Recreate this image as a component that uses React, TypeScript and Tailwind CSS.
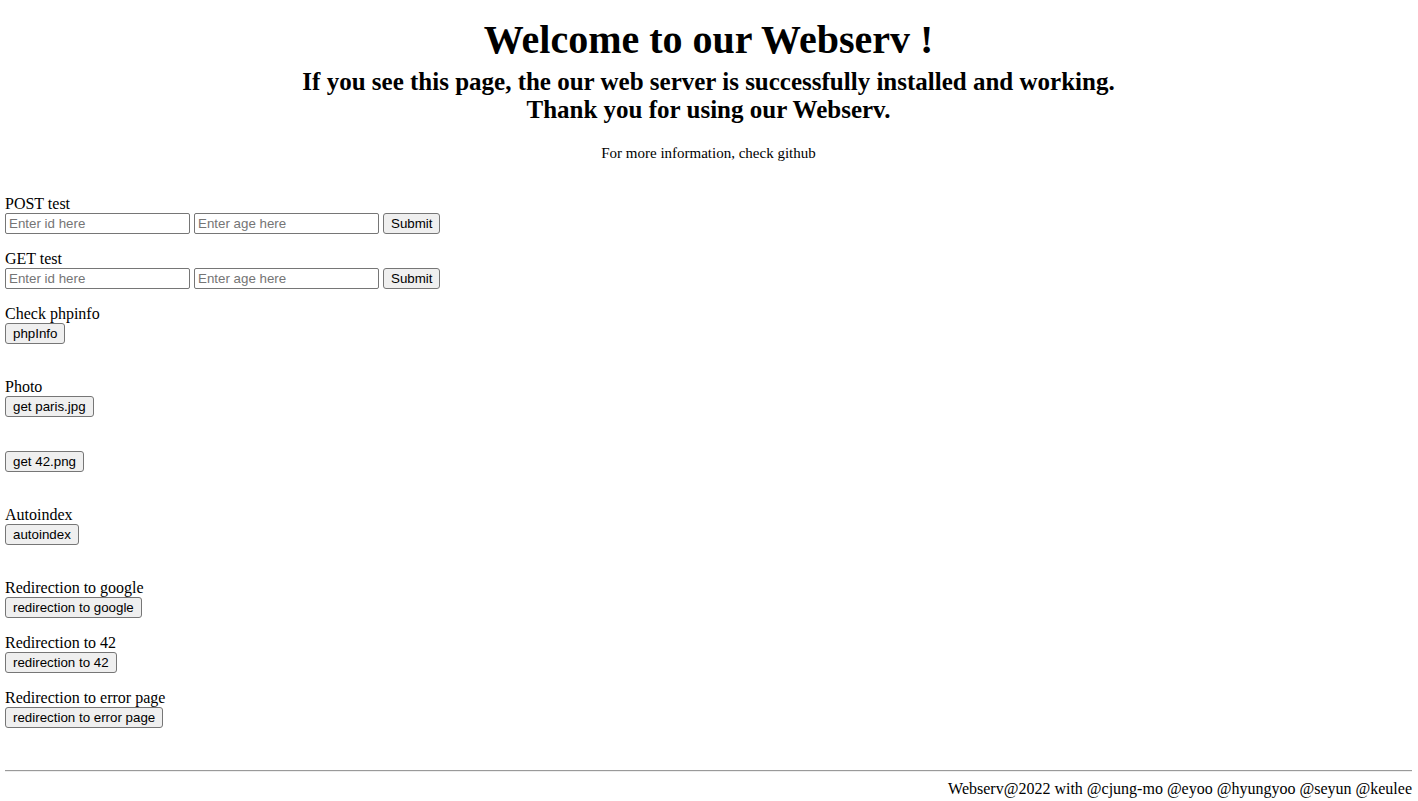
import React from "react";

const inputCls =
  "h-[21px] w-[185px] border border-[#767676] rounded-[2px] px-[3px] text-[13.33px] leading-[15px] bg-white text-black placeholder:text-[#757575] outline-none [font-family:'Liberation_Sans',Arial,sans-serif]";
const btnCls =
  "h-[21px] px-[7px] border border-[#767676] rounded-[3px] bg-[#efefef] text-[13.33px] leading-[15px] text-black [font-family:'Liberation_Sans',Arial,sans-serif]";

function Label({ children }: { children?: React.ReactNode }) {
  return <div className="h-[18px] leading-[20px] text-[16px]">{children}</div>;
}

function FormRow({ label, mt }: { label: string; mt: string }) {
  return (
    <div className={mt}>
      <Label>{label}</Label>
      <div className="mt-[1px] flex h-[21px] items-center gap-[4px]">
        <input className={inputCls} placeholder="Enter id here" />
        <input className={inputCls} placeholder="Enter age here" />
        <button className={btnCls}>Submit</button>
      </div>
    </div>
  );
}

function ButtonBlock({ label, text, mt }: { label?: string; text: string; mt: string }) {
  return (
    <div className={mt}>
      {label !== undefined ? <Label>{label}</Label> : null}
      <div className={label !== undefined ? "mt-[1px] flex h-[21px]" : "flex h-[21px]"}>
        <button className={btnCls}>{text}</button>
      </div>
    </div>
  );
}

export default function App() {
  return (
    <div className="min-h-[801px] bg-white pl-[5px] pr-[6px] text-black [font-family:'Liberation_Serif','Times_New_Roman',serif]">
      <div className="pt-[17px] text-center">
        <h1 className="text-[40px] font-bold leading-[46px]">Welcome to our Webserv !</h1>
        <h2 className="mt-[5px] text-[25px] font-bold leading-[28px]">
          If you see this page, the our web server is successfully installed and working.
          <br />
          Thank you for using our Webserv.
        </h2>
        <p className="mt-[21px] text-[15px] leading-[17px]">For more information, check github</p>
      </div>

      <FormRow label="POST test" mt="mt-[32px]" />
      <FormRow label="GET test" mt="mt-[15px]" />
      <ButtonBlock label="Check phpinfo" text="phpInfo" mt="mt-[15px]" />
      <ButtonBlock label="Photo" text="get paris.jpg" mt="mt-[33px]" />
      <ButtonBlock text="get 42.png" mt="mt-[34px]" />
      <ButtonBlock label="Autoindex" text="autoindex" mt="mt-[33px]" />
      <ButtonBlock label="Redirection to google" text="redirection to google" mt="mt-[33px]" />
      <ButtonBlock label="Redirection to 42" text="redirection to 42" mt="mt-[15px]" />
      <ButtonBlock label="Redirection to error page" text="redirection to error page" mt="mt-[15px]" />

      <hr className="mt-[42px] border-t border-t-[#9a9a9a] border-b border-b-[#eeeeee] h-0" />
      <div className="mt-[8px] text-right text-[16px] leading-[18px]">
        Webserv@2022 with @cjung-mo @eyoo @hyungyoo @seyun @keulee
      </div>
    </div>
  );
}
